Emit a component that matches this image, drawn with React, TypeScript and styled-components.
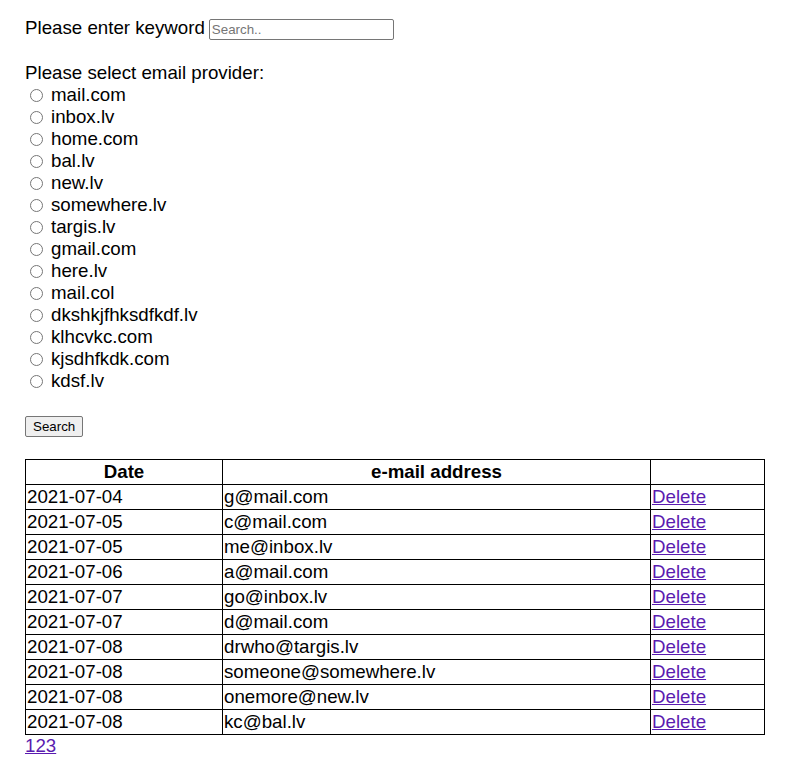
import { createGlobalStyle, styled } from "styled-components";

const providers = [
  "mail.com",
  "inbox.lv",
  "home.com",
  "bal.lv",
  "new.lv",
  "somewhere.lv",
  "targis.lv",
  "gmail.com",
  "here.lv",
  "mail.col",
  "dkshkjfhksdfkdf.lv",
  "klhcvkc.com",
  "kjsdhfkdk.com",
  "kdsf.lv",
];

const emails = [
  { date: "2021-07-04", email: "g@mail.com" },
  { date: "2021-07-05", email: "c@mail.com" },
  { date: "2021-07-05", email: "me@inbox.lv" },
  { date: "2021-07-06", email: "a@mail.com" },
  { date: "2021-07-07", email: "go@inbox.lv" },
  { date: "2021-07-07", email: "d@mail.com" },
  { date: "2021-07-08", email: "drwho@targis.lv" },
  { date: "2021-07-08", email: "someone@somewhere.lv" },
  { date: "2021-07-08", email: "onemore@new.lv" },
  { date: "2021-07-08", email: "kc@bal.lv" },
];

export default function App() {
  return (
    <>
      <GlobalStyle />
      <Page>
        <form onSubmit={(e) => e.preventDefault()}>
          <KeywordRow>
            <span>Please enter keyword</span>
            <SearchInput type="text" placeholder="Search.." />
          </KeywordRow>
          <ProviderTitle>Please select email provider:</ProviderTitle>
          <RadioList>
            {providers.map((p, index) => (
              <RadioRow key={`provider-${index}`}>
                <Radio type="radio" name="provider" value={p} id={`p-${index}`} />
                <label htmlFor={`p-${index}`}>{p}</label>
              </RadioRow>
            ))}
          </RadioList>
          <SearchButton type="submit">Search</SearchButton>
        </form>
        <EmailTable>
          <colgroup>
            <col style={{ width: 197 }} />
            <col style={{ width: 428 }} />
            <col style={{ width: 114 }} />
          </colgroup>
          <thead>
            <tr>
              <HeadCell>Date</HeadCell>
              <HeadCell>e-mail address</HeadCell>
              <HeadCell></HeadCell>
            </tr>
          </thead>
          <tbody>
            {emails.map((item, index) => (
              <tr key={`email-${index}`}>
                <Cell>{item.date}</Cell>
                <Cell>{item.email}</Cell>
                <Cell>
                  <PlainLink href="#">Delete</PlainLink>
                </Cell>
              </tr>
            ))}
          </tbody>
        </EmailTable>
        <PlainLink href="#">123</PlainLink>
      </Page>
    </>
  );
}

const GlobalStyle = createGlobalStyle`
  body {
    margin: 0;
    background: #ffffff;
    color: #000000;
    font-family: "Liberation Sans", Arial, sans-serif;
    font-size: 18.72px;
  }
`;

const Page = styled.div`
  padding: 17px 25px 20px 25px;
`;

const KeywordRow = styled.div`
  display: flex;
  align-items: center;
  height: 22px;
  gap: 4px;
`;

const SearchInput = styled.input`
  box-sizing: border-box;
  width: 185px;
  height: 21px;
  margin-top: 2px;
  padding: 1px 2px;
  border: 1px solid #767676;
  border-radius: 2px;
  font-family: "Liberation Sans", Arial, sans-serif;
  font-size: 13.33px;
  &::placeholder {
    color: #757575;
  }
`;

const ProviderTitle = styled.div`
  margin-top: 23px;
  height: 22px;
  line-height: 22px;
`;

const RadioList = styled.div`
  display: flex;
  flex-direction: column;
`;

const RadioRow = styled.div`
  display: flex;
  align-items: center;
  height: 22px;
  line-height: 22px;
`;

const Radio = styled.input`
  width: 13px;
  height: 13px;
  margin: 0 8px 0 5px;
`;

const SearchButton = styled.button`
  display: block;
  margin-top: 24px;
  height: 21px;
  padding: 1px 7px;
  font-family: "Liberation Sans", Arial, sans-serif;
  font-size: 13.33px;
  color: #000;
  background: #efefef;
  border: 1px solid #767676;
  border-radius: 2px;
`;

const EmailTable = styled.table`
  margin-top: 22px;
  width: 739px;
  border-collapse: collapse;
  table-layout: fixed;
`;

const HeadCell = styled.th`
  border: 1px solid #000;
  padding: 0 1px 2px 1px;
  height: 22px;
  font-weight: bold;
  text-align: center;
  line-height: 21px;
`;

const Cell = styled.td`
  border: 1px solid #000;
  padding: 0 1px 2px 1px;
  height: 22px;
  line-height: 21px;
`;

const PlainLink = styled.a`
  color: #5a1bb0;
  text-decoration: underline;
`;
